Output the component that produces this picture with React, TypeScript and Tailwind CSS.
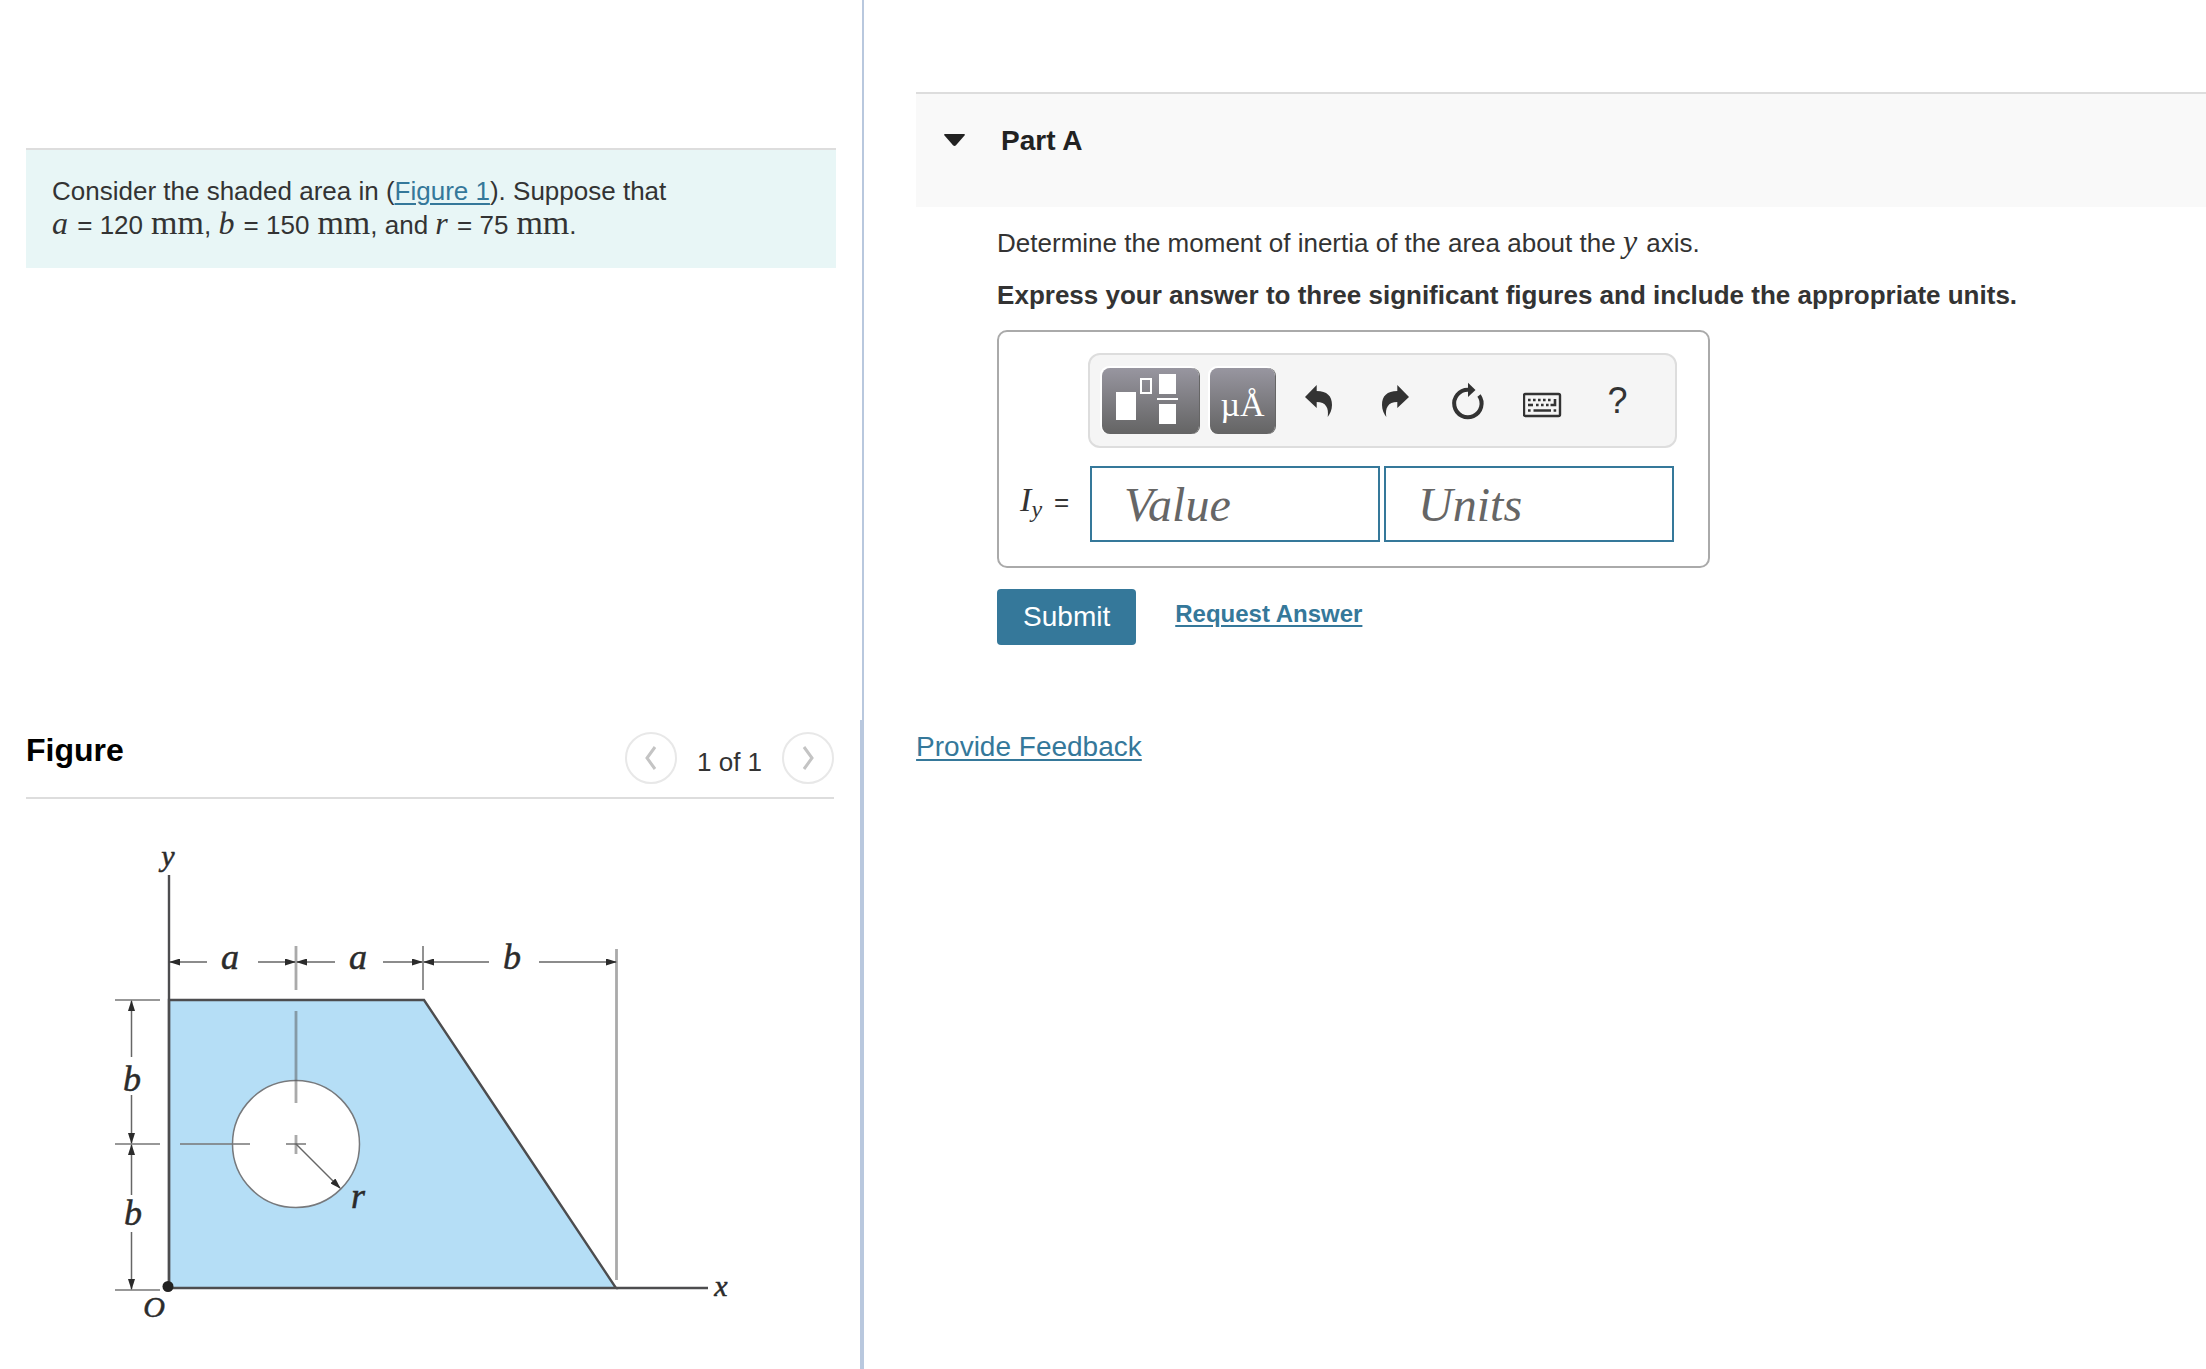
import { useState } from "react";
import type { ReactNode } from "react";

function MathVar({ children }: { children: ReactNode }) {
  return (
    <i className="mr-0.5 font-['Liberation_Serif',serif] text-[32px] leading-[0]">
      {children}
    </i>
  );
}

function Unit() {
  return (
    <span className="ml-2 font-['Liberation_Serif',serif] text-[34px] leading-[0]">
      mm
    </span>
  );
}

type ToolButtonProps = {
  label: string;
  children: ReactNode;
};

function ToolButton({ label, children }: ToolButtonProps) {
  return (
    <button
      type="button"
      aria-label={label}
      className="flex h-[66px] w-[75px] items-center justify-center text-[#333]"
    >
      {children}
    </button>
  );
}

function TemplateButton({
  label,
  className,
  children,
}: ToolButtonProps & { className: string }) {
  return (
    <button
      type="button"
      aria-label={label}
      className={`flex h-[66px] items-center justify-center rounded-lg bg-linear-to-b from-[#9896a0] to-[#646464] text-white shadow-[1px_0_0_#666,-1px_-1px_0_1px_#fff] ${className}`}
    >
      {children}
    </button>
  );
}

function Toolbar() {
  return (
    <div className="flex h-[95px] items-center rounded-xl border-2 border-[#ddd] bg-[#f5f5f5] pl-3">
      <TemplateButton label="Templates" className="w-[97px]">
        <svg width="97" height="66" viewBox="0 0 97 66" fill="currentColor">
          <rect x="14" y="24" width="20" height="28" />
          <rect x="39" y="11" width="10" height="14" fill="none" stroke="currentColor" strokeWidth="2" />
          <rect x="57" y="6" width="17" height="20" />
          <rect x="55" y="30" width="21" height="2" />
          <rect x="57" y="36" width="17" height="20" />
        </svg>
      </TemplateButton>
      <TemplateButton
        label="Symbols"
        className="ml-[11px] w-[65px] pt-2 font-['Liberation_Serif',serif] text-[34px] leading-none"
      >
        µÅ
      </TemplateButton>
      <div className="ml-[5px] flex">
        <ToolButton label="Undo">
          <svg width="40" height="40" viewBox="0 0 40 40" fill="currentColor">
            <path d="M7 16 18.7 4v6C29 10 34 15 34 24c0 5-2 9-4.3 12C31 27 28 21 18.7 21v6Z" />
          </svg>
        </ToolButton>
        <ToolButton label="Redo">
          <svg width="40" height="40" viewBox="0 0 40 40" fill="currentColor">
            <path d="M36 16 24.3 4v6C14 10 9 15 9 24c0 5 2 9 4.3 12C12 27 15 21 24.3 21v6Z" />
          </svg>
        </ToolButton>
        <ToolButton label="Reset">
          <svg width="40" height="40" viewBox="0 0 40 40">
            <path
              d="M31 14.500A13.700 13.700 0 1 1 20 8.800"
              fill="none"
              stroke="currentColor"
              strokeWidth="4"
            />
            <path d="M20 1.700 27.500 9 20 16Z" fill="currentColor" />
          </svg>
        </ToolButton>
        <ToolButton label="Keyboard shortcuts">
          <svg width="40" height="40" viewBox="0 0 40 40">
            <rect x="1" y="13" width="36" height="22" rx="1.5" fill="none" stroke="currentColor" strokeWidth="2.4" />
            <g stroke="currentColor" strokeWidth="2.6" fill="none">
              <path d="M5 19H29" strokeDasharray="2.6 2.4" />
              <path d="M5 24H10" />
              <path d="M13 24H26" strokeDasharray="2.6 2.4" />
              <path d="M32 18v6H27.500" />
              <path d="M5 29.500H7.600M10.500 29.500H28M30.600 29.500h2.600" />
            </g>
          </svg>
        </ToolButton>
        <ToolButton label="Help">
          <span className="text-4xl">?</span>
        </ToolButton>
      </div>
    </div>
  );
}

function FigureDrawing() {
  return (
    <svg
      viewBox="26 799 720 540"
      className="block h-[540px] w-[720px]"
      role="img"
      aria-label="Shaded trapezoid with a circular hole"
    >
      <defs>
        <marker
          id="arrow"
          markerUnits="userSpaceOnUse"
          markerWidth="11"
          markerHeight="7"
          refX="10"
          refY="3.5"
          orient="auto"
        >
          <path d="M0 0 11 3.500 0 7Z" fill="#2b2b2b" />
        </marker>
      </defs>

      {/* plate and hole */}
      <path d="M169 1000H424L616 1288H169Z" fill="#b5def6" stroke="#4d4d4f" strokeWidth="2.4" />
      <path d="M169 875V1288M616 1288H708" stroke="#4d4d4f" strokeWidth="2.4" />
      <circle cx="296" cy="1144" r="63.5" fill="#fff" stroke="#77797c" strokeWidth="1.5" />
      <circle cx="168" cy="1286.500" r="5.500" fill="#222" />

      {/* extension and centre lines */}
      <g stroke="#777" strokeWidth="1.6">
        <path d="M423 946V990" />
        <path d="M115 1000H160M115 1144H160M115 1290H160" />
        <path d="M180 1144H250M286 1144H306" />
      </g>
      <g stroke="#555" strokeOpacity="0.5" strokeWidth="2.8">
        <path d="M296 946V990M296 1011V1103M296 1135V1154" />
        <path d="M616.500 949V1280" />
      </g>

      {/* dimensions */}
      <g stroke="#666" strokeWidth="1.5" fill="none">
        <path d="M207 962H170" markerEnd="url(#arrow)" />
        <path d="M258 962H295" markerEnd="url(#arrow)" />
        <path d="M335 962H297" markerEnd="url(#arrow)" />
        <path d="M383 962H422" markerEnd="url(#arrow)" />
        <path d="M489 962H424" markerEnd="url(#arrow)" />
        <path d="M539 962H616" markerEnd="url(#arrow)" />
        <path d="M131.500 1057V1001" markerEnd="url(#arrow)" />
        <path d="M131.500 1095V1143" markerEnd="url(#arrow)" />
        <path d="M131.500 1195V1145" markerEnd="url(#arrow)" />
        <path d="M131.500 1232V1289" markerEnd="url(#arrow)" />
        <path d="M296 1144 340 1188" markerEnd="url(#arrow)" />
      </g>

      <g
        fill="#2b2b2b"
        stroke="#2b2b2b"
        strokeWidth="0.5"
        className="font-['Liberation_Serif',serif] text-4xl italic"
        textAnchor="middle"
      >
        <text x="230" y="969">a</text>
        <text x="358" y="969">a</text>
        <text x="512" y="969">b</text>
        <text x="132" y="1091">b</text>
        <text x="133" y="1225">b</text>
        <text x="358" y="1208">r</text>
      </g>
      <g
        fill="#2b2b2b"
        stroke="#2b2b2b"
        strokeWidth="0.5"
        className="font-['Liberation_Serif',serif] text-[30px] italic"
        textAnchor="middle"
      >
        <text x="168" y="866">y</text>
        <text x="721" y="1296">x</text>
        <text x="154" y="1317">O</text>
      </g>
    </svg>
  );
}

function PagerButton({ label, d }: { label: string; d: string }) {
  return (
    <button
      type="button"
      aria-label={label}
      className="flex size-[52px] items-center justify-center rounded-full border-2 border-[#e8e8e8]"
    >
      <svg width="28" height="28" viewBox="0 0 28 28" fill="none" stroke="#c4c4c4" strokeWidth="3">
        <path d={d} />
      </svg>
    </button>
  );
}

function ProblemPane() {
  return (
    <aside className="flex w-[39.17%] shrink-0 flex-col">
      <div className="h-[720px] border-r-2 border-[#b9c8de] pt-[148px] pr-[26px] pl-[26px]">
        <div className="h-[120px] border-t-2 border-[#ddd] bg-[#e8f6f6] px-[26px] pt-6 text-[26px] leading-[34px]">
          <p>
            Consider the shaded area in (
            <a href="#figure" className="text-[#35789a] underline underline-offset-3">
              Figure 1
            </a>
            ). Suppose that
          </p>
          <p className="whitespace-nowrap">
            <MathVar>a</MathVar> = 120
            <Unit />, <MathVar>b</MathVar> = 150
            <Unit />, and <MathVar>r</MathVar> = 75
            <Unit />.
          </p>
        </div>
      </div>

      <section
        id="figure"
        className="flex-1 border-r-4 border-[#b9c8de] pr-[26px] pl-[26px]"
      >
        <div className="flex h-[79px] justify-between border-b-2 border-[#ddd] pt-3">
          <h2 className="text-[32px] leading-9 font-bold text-black">Figure</h2>
          <div className="flex gap-5">
            <PagerButton label="Previous figure" d="M18 3 10 14 18 25" />
            <span className="pt-[13px] text-[26px] leading-[34px]">1 of 1</span>
            <PagerButton label="Next figure" d="M10 3 18 14 10 25" />
          </div>
        </div>
        <FigureDrawing />
      </section>
    </aside>
  );
}

function AnswerBox() {
  const [value, setValue] = useState("");
  const [units, setUnits] = useState("");
  const field =
    "h-[76px] w-[290px] border-2 border-[#35789a] bg-white pl-8 font-['Liberation_Serif',serif] text-5xl text-[#333] outline-none placeholder:italic placeholder:text-[#666] placeholder:opacity-100";

  return (
    <div className="mt-[18px] flex h-[238px] w-[713px] flex-col rounded-[10px] border-2 border-[#aaa] pt-[21px]">
      <div className="ml-[89px] w-[589px]">
        <Toolbar />
      </div>
      <div className="mt-[18px] flex items-center">
        <label
          htmlFor="value"
          className="w-[91px] pb-1 pl-[21px] text-[26px] whitespace-nowrap"
        >
          <i className="font-['Liberation_Serif',serif] text-[34px] leading-[0]">I</i>
          <sub className="font-['Liberation_Serif',serif] text-2xl leading-none italic">y</sub>
          <span className="ml-3">=</span>
        </label>
        <div className="flex gap-1">
          <input
            id="value"
            type="text"
            placeholder="Value"
            value={value}
            onChange={(e) => setValue(e.target.value)}
            className={field}
          />
          <input
            type="text"
            aria-label="Units"
            placeholder="Units"
            value={units}
            onChange={(e) => setUnits(e.target.value)}
            className={field}
          />
        </div>
      </div>
    </div>
  );
}

export default function App() {
  const [open, setOpen] = useState(true);

  return (
    <div className="flex min-h-screen bg-white font-['Liberation_Sans',Arial,sans-serif] text-[#333]">
      <ProblemPane />

      <main className="min-w-0 flex-1 pt-[92px] pl-[52px]">
        <section>
          <button
            type="button"
            aria-expanded={open}
            onClick={() => setOpen(!open)}
            className="flex h-[115px] w-full items-start border-t-2 border-[#ddd] bg-[#f9f9f9] pt-[30px] pl-7 text-left text-[28px] leading-[34px] font-bold text-[#222]"
          >
            <svg width="21" height="32" viewBox="0 0 21 32" fill="currentColor">
              <path d="M1 10H20Q21.500 10 20.500 11.500L12 21.300Q10.500 22.500 9 21.300L.5 11.500Q-.5 10 1 10Z" />
            </svg>
            <span className="ml-9">Part A</span>
          </button>

          {open && (
            <div className="pt-[19px] pl-[81px] text-[26px] leading-[34px]">
              <p>
                Determine the moment of inertia of the area about the{" "}
                <MathVar>y</MathVar> axis.
              </p>
              <p className="mt-[18px] font-bold">
                Express your answer to three significant figures and include the
                appropriate units.
              </p>
              <AnswerBox />
              <div className="mt-[21px] flex items-start">
                <button
                  type="button"
                  className="h-14 rounded bg-[#35789a] px-[26px] text-[28px] text-white"
                >
                  Submit
                </button>
                <a
                  href="#request"
                  className="mt-2 ml-[39px] text-2xl leading-[34px] font-bold text-[#35789a] underline underline-offset-3"
                >
                  Request Answer
                </a>
              </div>
            </div>
          )}
        </section>

        <a
          href="#feedback"
          className="mt-[84px] inline-block text-[28px] leading-9 text-[#35789a] underline underline-offset-3"
        >
          Provide Feedback
        </a>
      </main>
    </div>
  );
}
